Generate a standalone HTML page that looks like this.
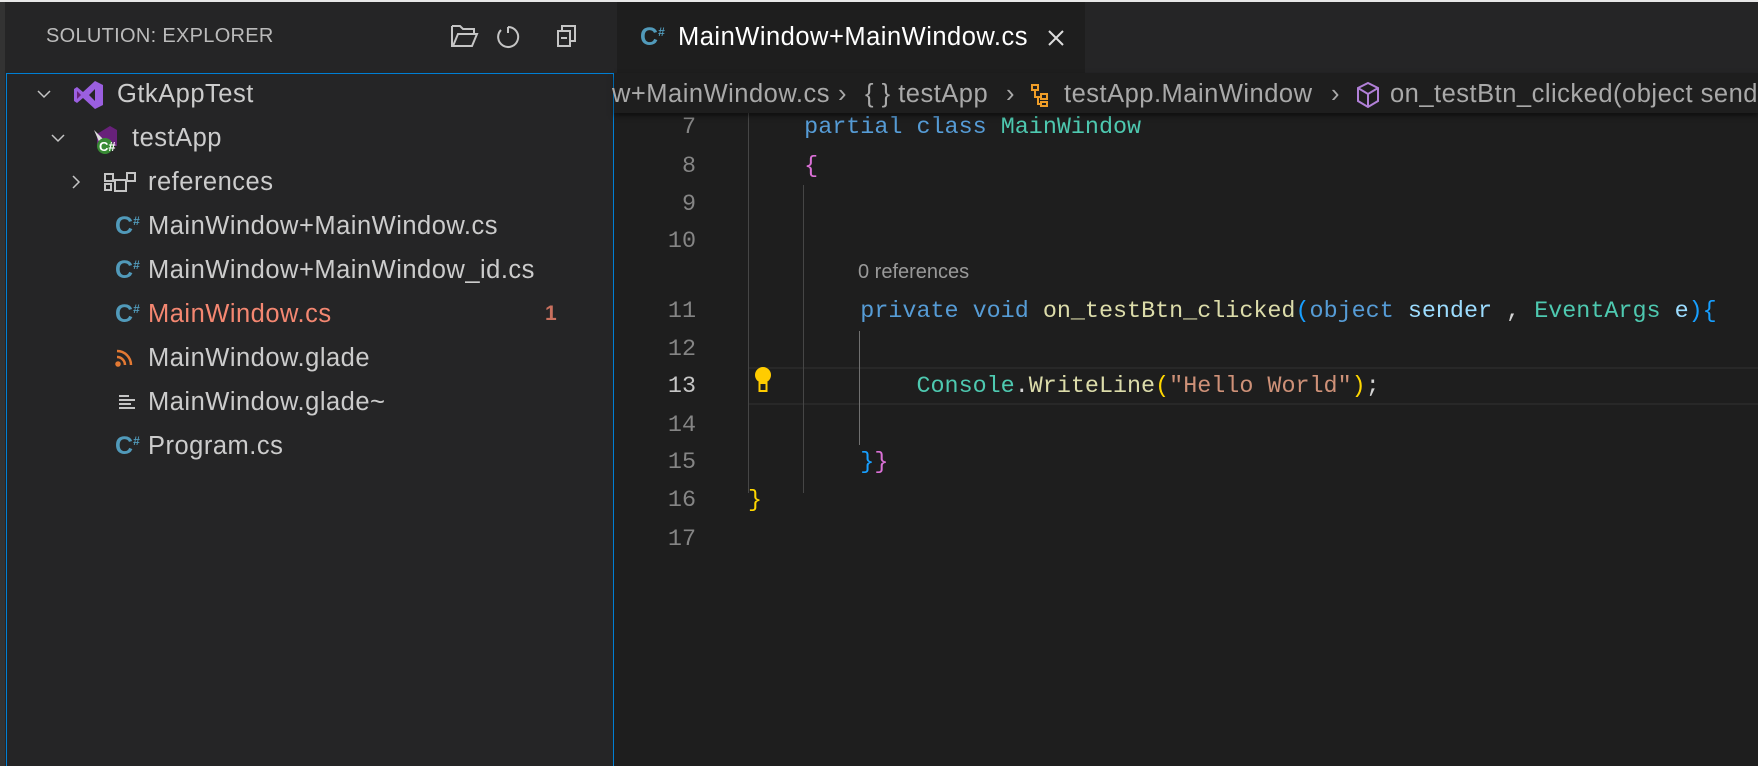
<!DOCTYPE html>
<html><head><meta charset="utf-8"><style>
*{margin:0;padding:0;box-sizing:border-box}
body{width:1758px;height:766px;overflow:hidden;background:#1e1e1e;position:relative;font-family:"Liberation Sans",sans-serif;color:#ccc}
.a{position:absolute;white-space:pre}
.t{font-size:25.5px;letter-spacing:0.5px;line-height:30px;color:#cccccc}
.m{font-family:"Liberation Mono",monospace;font-size:23.4px;line-height:38px;height:38px}
.ln{position:absolute;width:60px;left:636px;text-align:right;color:#858585}
.k{color:#569cd6}.c{color:#4ec9b0}.f{color:#dcdcaa}.p{color:#9cdcfe}.s{color:#ce9178}.y{color:#ffd700}.o{color:#da70d6}.b{color:#179fff}.w{color:#d4d4d4}
.g{position:absolute;width:1px;background:#464646}
</style></head><body>
<div class="a" style="left:0;top:0;width:1758px;height:2px;background:#e8e8e8"></div>
<!-- sidebar -->
<div class="a" style="left:0;top:2px;width:614px;height:764px;background:#252526"></div>
<div class="a" style="left:0;top:2px;width:5px;height:764px;background:#333"></div>
<div class="a" style="left:46px;top:22px;font-size:20px;letter-spacing:0.3px;line-height:28px;color:#bbbbbb">SOLUTION: EXPLORER</div>
<svg class="a" style="left:450px;top:22px" width="140" height="30" viewBox="0 0 140 30" fill="none" stroke="#c5c5c5" stroke-width="2">
<path d="M2 4h8l3 3h11v4M2 4v20h20l5-12H8L3 24"/>
<path d="M58 5a10 10 0 1 1-7 3M58 5v6"/>
<rect x="108" y="9" width="12" height="15"/><path d="M112 9V4h13v15h-5M111 16h6"/>
</svg>
<div class="a" style="left:6px;top:73px;width:608px;height:693px;border:1px solid #007fd4;border-bottom:none"></div>
<!-- tree -->
<svg class="a" style="left:36px;top:86px" width="16" height="16" viewBox="0 0 16 16" fill="none" stroke="#c5c5c5" stroke-width="1.5"><path d="M2 5l6 6 6-6"/></svg>
<svg class="a" style="left:72px;top:79px" width="32" height="32" viewBox="0 0 32 32"><path d="M23 2l8 4v20l-8 4-12-11-6 5-3-2V10l3-2 6 5zM23 10l-6 6 6 6z" fill="#9b5fe0"/><path d="M5 12v8l4-4z" fill="#68217a"/></svg>
<div class="a t" style="left:117px;top:79px">GtkAppTest</div>
<svg class="a" style="left:50px;top:130px" width="16" height="16" viewBox="0 0 16 16" fill="none" stroke="#c5c5c5" stroke-width="1.5"><path d="M2 5l6 6 6-6"/></svg>
<svg class="a" style="left:90px;top:124px" width="32" height="32" viewBox="0 0 32 32"><path d="M20 2l7 4v16h-20V10z" fill="#68217a"/><path d="M4 6l10 10-4 4z" fill="#ddd"/><circle cx="15" cy="22" r="8" fill="#388a34"/><text x="9" y="27" font-size="13" font-weight="bold" fill="#fff" font-family="Liberation Sans">C#</text></svg>
<div class="a t" style="left:132px;top:123px">testApp</div>
<svg class="a" style="left:68px;top:174px" width="16" height="16" viewBox="0 0 16 16" fill="none" stroke="#c5c5c5" stroke-width="1.5"><path d="M5 2l6 6-6 6"/></svg>
<svg class="a" style="left:103px;top:171px" width="34" height="24" viewBox="0 0 34 24" fill="none" stroke="#c5c5c5" stroke-width="2"><rect x="2" y="3" width="8" height="7"/><rect x="2" y="13" width="6" height="6"/><rect x="12" y="9" width="11" height="11"/><rect x="24" y="2" width="8" height="8"/></svg>
<div class="a t" style="left:148px;top:167px">references</div>
<div class="a" style="left:115px;top:207px;font-size:25px;font-weight:bold;color:#519aba;line-height:38px">C<span style="font-size:12px;vertical-align:top;line-height:28px">#</span></div>
<div class="a t" style="left:148px;top:211px">MainWindow+MainWindow.cs</div>
<div class="a" style="left:115px;top:251px;font-size:25px;font-weight:bold;color:#519aba;line-height:38px">C<span style="font-size:12px;vertical-align:top;line-height:28px">#</span></div>
<div class="a t" style="left:148px;top:255px">MainWindow+MainWindow_id.cs</div>
<div class="a" style="left:115px;top:295px;font-size:25px;font-weight:bold;color:#519aba;line-height:38px">C<span style="font-size:12px;vertical-align:top;line-height:28px">#</span></div>
<div class="a t" style="left:148px;top:299px;color:#f48771">MainWindow.cs</div>
<div class="a t" style="left:545px;top:299px;color:#c9705e;font-weight:bold;font-size:21px">1</div>
<svg class="a" style="left:115px;top:349px" width="18" height="18" viewBox="0 0 18 18" fill="none" stroke="#e37933" stroke-width="2.5"><circle cx="3" cy="15" r="1.5" fill="#e37933"/><path d="M2 8a8 8 0 0 1 8 8M2 2a14 14 0 0 1 14 14"/></svg>
<div class="a t" style="left:148px;top:343px">MainWindow.glade</div>
<svg class="a" style="left:118px;top:393px" width="18" height="18" viewBox="0 0 18 18" fill="none" stroke="#c5c5c5" stroke-width="2"><path d="M1 3h10M1 7h16M1 11h12M1 15h16"/></svg>
<div class="a t" style="left:148px;top:387px">MainWindow.glade~</div>
<div class="a" style="left:115px;top:427px;font-size:25px;font-weight:bold;color:#519aba;line-height:38px">C<span style="font-size:12px;vertical-align:top;line-height:28px">#</span></div>
<div class="a t" style="left:148px;top:431px">Program.cs</div>
<!-- tab bar -->
<div class="a" style="left:614px;top:2px;width:1144px;height:71px;background:#252526"></div>
<div class="a" style="left:617px;top:2px;width:468px;height:71px;background:#1e1e1e"></div>
<div class="a" style="left:640px;top:18px;font-size:25px;font-weight:bold;color:#519aba;line-height:38px">C<span style="font-size:12px;vertical-align:top;line-height:28px">#</span></div>
<div class="a t" style="left:678px;top:22px;color:#fff">MainWindow+MainWindow.cs</div>
<svg class="a" style="left:1047px;top:29px" width="18" height="18" viewBox="0 0 18 18" stroke="#ddd" stroke-width="2"><path d="M2 2l14 14M16 2L2 16"/></svg>
<!-- breadcrumb -->
<div class="a" style="left:614px;top:73px;width:1144px;height:40px;background:#1e1e1e;box-shadow:0 3px 5px rgba(0,0,0,.5);z-index:2"></div>
<div class="a t" style="left:612px;top:79px;z-index:3;color:#a9a9a9">w+MainWindow.cs</div>
<div class="a t" style="left:838px;top:79px;z-index:3;color:#a9a9a9">›</div>
<div class="a t" style="left:865px;top:79px;z-index:3;color:#a9a9a9">{ } testApp</div>
<div class="a t" style="left:1006px;top:79px;z-index:3;color:#a9a9a9">›</div>
<svg class="a" style="left:1029px;top:82px;z-index:3" width="26" height="26" viewBox="0 0 26 26" fill="none" stroke="#ee9d28" stroke-width="2"><path d="M3 3h6v5H3zM12 12h6v5h-6zM12 20h6v4h-6zM6 8v7h6M9 15v7h3"/></svg>
<div class="a t" style="left:1064px;top:79px;z-index:3;color:#a9a9a9">testApp.MainWindow</div>
<div class="a t" style="left:1331px;top:79px;z-index:3;color:#a9a9a9">›</div>
<svg class="a" style="left:1355px;top:81px;z-index:3" width="26" height="28" viewBox="0 0 26 28" fill="none" stroke="#b180d7" stroke-width="2"><path d="M13 2l10 5v13l-10 6-10-6V7zM3 7l10 6 10-6M13 13v13"/></svg>
<div class="a t" style="left:1390px;top:79px;z-index:3;color:#a9a9a9">on_testBtn_clicked(object sender</div>
<!-- code -->
<div class="a" style="left:748px;top:367px;width:1010px;height:38px;border-top:2px solid #282828;border-bottom:2px solid #282828"></div>
<div class="g" style="left:748px;top:109px;height:384px"></div>
<div class="g" style="left:803px;top:185px;height:308px"></div>
<div class="g" style="left:859px;top:331px;height:114px;background:#707070"></div>
<div class="a m ln" style="top:109px">7</div>
<div class="a m ln" style="top:148px">8</div>
<div class="a m ln" style="top:186px">9</div>
<div class="a m ln" style="top:223px">10</div>
<div class="a m ln" style="top:293px">11</div>
<div class="a m ln" style="top:331px">12</div>
<div class="a m ln" style="top:368px;color:#c6c6c6">13</div>
<div class="a m ln" style="top:407px">14</div>
<div class="a m ln" style="top:444px">15</div>
<div class="a m ln" style="top:482px">16</div>
<div class="a m ln" style="top:521px">17</div>
<div class="a m" style="left:748px;top:109px">    <span class="k">partial</span> <span class="k">class</span> <span class="c">MainWindow</span></div>
<div class="a m" style="left:748px;top:148px">    <span class="o">{</span></div>
<div class="a" style="left:858px;top:260px;font-size:20px;line-height:24px;color:#999">0 references</div>
<div class="a m" style="left:748px;top:293px">        <span class="k">private</span> <span class="k">void</span> <span class="f">on_testBtn_clicked</span><span class="b">(</span><span class="k">object</span> <span class="p">sender</span> <span class="w">,</span> <span class="c">EventArgs</span> <span class="p">e</span><span class="b">){</span></div>
<div class="a m" style="left:748px;top:368px">            <span class="c">Console</span><span class="w">.</span><span class="f">WriteLine</span><span class="y">(</span><span class="s">"Hello World"</span><span class="y">)</span><span class="w">;</span></div>
<div class="a m" style="left:748px;top:444px">        <span class="b">}</span><span class="o">}</span></div>
<div class="a m" style="left:748px;top:482px"><span class="y">}</span></div>
<svg class="a" style="left:753px;top:366px" width="20" height="28" viewBox="0 0 20 28"><circle cx="10" cy="9" r="8" fill="#ffcc00"/><rect x="6" y="14" width="8" height="6" fill="#ffcc00"/><rect x="6.5" y="17" width="7" height="8" fill="#1e1e1e" stroke="#ffcc00" stroke-width="2"/></svg>
</body></html>
